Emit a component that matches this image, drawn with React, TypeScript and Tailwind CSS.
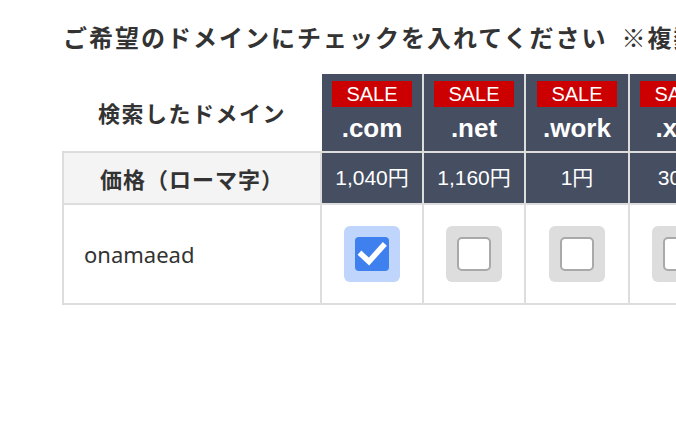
const DOMAINS = [
  { tld: ".com", price: "1,040円", checked: true, width: "w-[102px]" },
  { tld: ".net", price: "1,160円", checked: false, width: "w-[102px]" },
  { tld: ".work", price: "1円", checked: false, width: "w-[104px]" },
  { tld: ".xyz", price: "30円", checked: false, width: "w-[102px]" },
] as const;

const JP = { fontFamily: '"Noto Sans CJK JP", sans-serif' };
const LATIN = { fontFamily: '"Liberation Sans", "Noto Sans CJK JP", sans-serif' };

function CheckBox({ checked }: { checked: boolean }) {
  if (checked) {
    return (
      <div className="mx-auto flex h-[56px] w-[56px] items-center justify-center rounded-[6px] bg-[#bfd5fb]">
        <div className="flex h-[34px] w-[34px] items-center justify-center rounded-[4px] bg-[#3f80ef]">
          <svg width="34" height="34" viewBox="0 0 34 34">
            <path
              d="M6.5 17.5 L14 24.5 L28 9"
              fill="none"
              stroke="#fff"
              strokeWidth="5.5"
              strokeLinecap="square"
            />
          </svg>
        </div>
      </div>
    );
  }
  return (
    <div className="mx-auto flex h-[56px] w-[56px] items-center justify-center rounded-[6px] bg-[#dddddd]">
      <div className="h-[34px] w-[34px] rounded-[5px] border-2 border-[#a9a9a9] bg-white" />
    </div>
  );
}

export default function App() {
  return (
    <div className="h-[440px] w-[676px] overflow-hidden bg-white pl-[62px] pt-[21px] text-[#333]">
      <h1
        className="whitespace-nowrap pl-[1px] text-[24px] font-bold leading-[32px] tracking-[2px]"
        style={JP}
      >
        ご希望のドメインにチェックを入れてください
        <span className="ml-[14px]">※複数選択可能です</span>
      </h1>

      <table className="mt-[21px] w-[670px] max-w-none table-fixed border-separate border-spacing-0">
        <tbody>
          <tr>
            <td
              className="h-[79px] w-[260px] border-b-2 border-[#dddddd] text-center text-[22px] font-bold tracking-[1.5px]"
              style={JP}
            >
              検索したドメイン
            </td>
            {DOMAINS.map((d) => (
              <td
                key={d.tld}
                className={`${d.width} border-b-2 border-r-2 border-[#dddddd] bg-[#464e62] p-0 align-middle`}
              >
                <div className="flex flex-col items-center gap-[5px]">
                  <span
                    className="flex h-[26px] w-[80px] items-center justify-center bg-[#cc0000] text-[20px] leading-none text-white"
                    style={LATIN}
                  >
                    SALE
                  </span>
                  <span className="text-[26px] font-bold leading-[32px] text-white" style={LATIN}>
                    {d.tld}
                  </span>
                </div>
              </td>
            ))}
          </tr>
          <tr>
            <td
              className="h-[52px] border-x-2 border-b-2 border-[#dddddd] bg-[#f4f4f4] text-center text-[22px] font-bold tracking-[1px]"
              style={JP}
            >
              価格（ローマ字）
            </td>
            {DOMAINS.map((d) => (
              <td
                key={d.tld}
                className="border-b-2 border-r-2 border-[#dddddd] bg-[#464e62] text-center text-[21px] text-white"
                style={LATIN}
              >
                {d.price}
              </td>
            ))}
          </tr>
          <tr>
            <td
              className="h-[100px] border-x-2 border-b-2 border-[#dddddd] pl-[20px] text-[22px]"
              style={{ fontFamily: '"Noto Sans", sans-serif' }}
            >
              onamaead
            </td>
            {DOMAINS.map((d) => (
              <td key={d.tld} className="border-b-2 border-r-2 border-[#dddddd]">
                <CheckBox checked={d.checked} />
              </td>
            ))}
          </tr>
        </tbody>
      </table>
    </div>
  );
}
